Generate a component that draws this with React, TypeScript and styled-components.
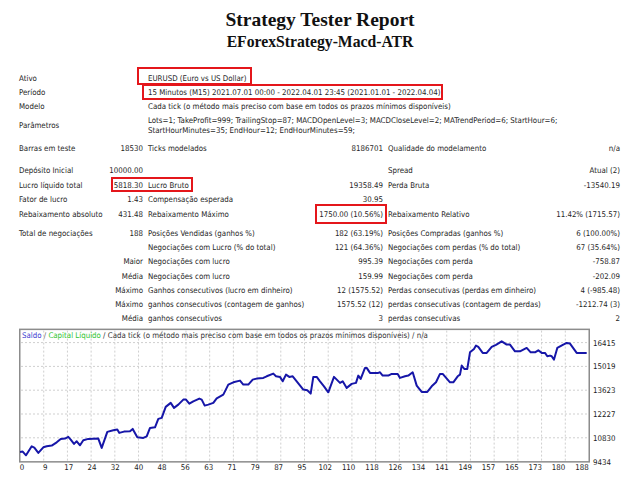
import React from "react";
import styled, { createGlobalStyle } from "styled-components";

const GlobalStyle = createGlobalStyle`
  html, body { margin: 0; padding: 0; background: #fff; }
  body {
    width: 640px;
    height: 480px;
    overflow: hidden;
    font-family: "DejaVu Sans Condensed", "Liberation Sans", sans-serif;
  }
`;

const Page = styled.div`
  position: relative;
  width: 640px;
  height: 480px;
  overflow: hidden;
  background: #fff;
`;

const Header = styled.header`
  padding-top: 9px;
  text-align: center;
  font-family: "Liberation Serif", "Times New Roman", serif;
  color: #111;
`;

const Title = styled.h1`
  margin: 0;
  font-size: 19.5px;
  line-height: 22px;
  font-weight: bold;
`;

const Subtitle = styled.h2`
  margin: 2px 0 0;
  font-size: 15.7px;
  line-height: 18px;
  font-weight: bold;
`;

const Report = styled.section`
  margin-top: 21px;
  padding-left: 19px;
  font-size: 7.85px;
  color: #262626;
`;

const Row = styled.div<{ $h: number }>`
  display: grid;
  grid-template-columns: 85px 39px 170px 70px 177px 60px;
  height: ${(p) => p.$h}px;
  align-items: center;
  white-space: nowrap;
  line-height: 10px;
`;

const Spacer = styled.div<{ $h: number }>`
  height: ${(p) => p.$h}px;
`;

const Name = styled.div`
  grid-column: 1;
`;

const Num = styled.div<{ $col: number }>`
  grid-column: ${(p) => p.$col};
  display: flex;
  justify-content: flex-end;
`;

const Caption = styled.div<{ $col: number }>`
  grid-column: ${(p) => p.$col};
  padding-left: 5px;
`;

const Wide = styled.div`
  grid-column: 3 / 7;
  padding-left: 5px;
`;

const Mark = styled.div<{ $x: number; $y: number; $w: number; $h: number }>`
  position: absolute;
  left: ${(p) => p.$x}px;
  top: ${(p) => p.$y}px;
  width: ${(p) => p.$w}px;
  height: ${(p) => p.$h}px;
  box-sizing: border-box;
  border: 2px solid #e4161b;
  pointer-events: none;
`;

const Chart = styled.svg`
  display: block;
  width: 640px;
  height: 153.6px;
  font-family: "DejaVu Sans Condensed", "Liberation Sans", sans-serif;
  font-size: 7.85px;
`;

type Line = [string, string, string, string, string, string];

const stats1: Line[] = [
  ["Depósito Inicial", "10000.00", "", "", "Spread", "Atual (2)"],
  ["Lucro líquido total", "5818.30", "Lucro Bruto", "19358.49", "Perda Bruta", "-13540.19"],
  ["Fator de lucro", "1.43", "Compensação esperada", "30.95", "", ""],
  ["Rebaixamento absoluto", "431.48", "Rebaixamento Máximo", "1750.00 (10.56%)", "Rebaixamento Relativo", "11.42% (1715.57)"],
];
const heights1 = [14, 15, 14, 15];

const stats2: Line[] = [
  ["Total de negociações", "188", "Posições Vendidas (ganhos %)", "182 (63.19%)", "Posições Compradas (ganhos %)", "6 (100.00%)"],
  ["", "", "Negociações com Lucro (% do total)", "121 (64.36%)", "Negociações com perdas (% do total)", "67 (35.64%)"],
  ["", "Maior", "Negociações com lucro", "995.39", "Negociações com perda", "-758.87"],
  ["", "Média", "Negociações com lucro", "159.99", "Negociações com perda", "-202.09"],
  ["", "Máximo", "Ganhos consecutivos (lucro em dinheiro)", "12 (1575.52)", "Perdas consecutivas (perdas em dinheiro)", "4 (-985.48)"],
  ["", "Máximo", "ganhos consecutivos (contagem de ganhos)", "1575.52 (12)", "perdas consecutivas (contagem de perdas)", "-1212.74 (3)"],
  ["", "Média", "ganhos consecutivos", "3", "perdas consecutivas", "2"],
];

const StatRow = ({ line, h }: { line: Line; h: number }) => (
  <Row $h={h}>
    <Name>{line[0]}</Name>
    <Num $col={2}>{line[1]}</Num>
    <Caption $col={3}>{line[2]}</Caption>
    <Num $col={4}>{line[3]}</Num>
    <Caption $col={5}>{line[4]}</Caption>
    <Num $col={6}>{line[5]}</Num>
  </Row>
);

const pts: [number, number][] = [
  [20, 452.3], [22.7, 452], [26, 455.7], [31.7, 446.7], [34.3, 448], [38.3, 453.3], [43.3, 447.7],
  [46.7, 446.7], [51.7, 446], [56.7, 442.7], [60.7, 439.3], [65, 439], [68.3, 437.3], [70.7, 440],
  [74, 444.3], [76.7, 441.7], [80, 445.7], [83.3, 440.7], [88.3, 439.3], [98.3, 439], [101.7, 448.3],
  [107.3, 432.3], [113.3, 430.7], [117.3, 430], [119.3, 433.3], [124, 432], [130, 431.7], [132.7, 429.3],
  [137.3, 437.7], [143.3, 438.3], [146.7, 436.7], [150, 428.3], [155, 427.7], [158.3, 419.3],
  [161.7, 418.3], [165.7, 407.3], [170.7, 403.3], [174, 408.3], [178.3, 405], [183.3, 400], [186, 400],
  [189.3, 404], [193.3, 401.7], [199.3, 399], [201.7, 400], [204.7, 406], [208.3, 405], [213.3, 403.3],
  [216.7, 398.7], [223.3, 395], [228.3, 385], [233.3, 382.7], [240, 381], [243.3, 385], [248.3, 385],
  [252.7, 380], [256.7, 379], [263.3, 378.3], [266.7, 376.7], [273.3, 374], [276, 376.7], [280, 377.3],
  [282.7, 381.7], [286, 375], [289.3, 377.3], [292.7, 376.7], [303.3, 390], [307.3, 390.7], [310.7, 394],
  [313.3, 377.3], [316.7, 377.3], [320, 381.7], [324, 386.7], [328.3, 392.7], [334, 377.3], [340, 383.3],
  [342.7, 381.7], [346.7, 388.3], [351.7, 384.3], [356, 383.3], [358.3, 376], [360.7, 379.3], [365, 368.3],
  [366.7, 368.3], [370, 373.3], [378.3, 373.3], [380, 372.7], [382.7, 376], [388.3, 376], [391.7, 374.3],
  [397.7, 374.3], [400, 378.3], [405, 376.7], [408.3, 376], [412.7, 372.7], [416.7, 386], [421.7, 392.3],
  [427.3, 392.3], [431.7, 386.7], [436, 382.7], [440, 374.3], [442.7, 374.3], [450, 382.7], [453.3, 382.7],
  [457.7, 376.7], [460, 375], [461.7, 366], [464.3, 369.3], [467.3, 369.3], [470, 352.7], [474, 349.3],
  [476, 346], [478.3, 347.3], [482.7, 353.3], [486.7, 353.3], [491.7, 347.3], [496, 345.3], [501.7, 341.7],
  [503.3, 342.7], [506.7, 345], [510, 345], [515, 351.7], [520, 351.7], [526.7, 348.3], [530.7, 352.7],
  [535, 352.7], [538.3, 350.7], [541.7, 353.3], [545, 353.3], [547.3, 356.7], [550, 356], [551.7, 356.7],
  [554, 360], [557.3, 348.3], [563.3, 345], [566.7, 343.3], [570, 344], [576.7, 353.3], [586.7, 353.3],
];

const xLabels = [0, 9, 17, 24, 32, 40, 48, 56, 63, 71, 79, 87, 95, 102, 110, 118, 126, 134, 141, 149, 157, 165, 173, 180, 188];
const yLabels = ["9434", "10830", "12227", "13623", "15019", "16415"];

const EquityChart = () => {
  const left = 20;
  const right = 589;
  const top = 330;
  const bottom = 462;
  const dx = (right - left) / 24;
  const dy = 23.8;
  const path = pts.map((p, i) => `${i ? "L" : "M"}${p[0]} ${p[1]}`).join(" ");
  return (
    <Chart viewBox="0 326.4 640 153.6">
      <rect x={19.75} y={329.75} width={569.5} height={132.5} fill="#fff" stroke="#8c8c8c" strokeWidth={1.5} />
      {Array.from({ length: 23 }, (_, i) => {
        const x = left + (i + 1) * dx;
        return <line key={`v${i}`} x1={x} x2={x} y1={top + 1} y2={bottom - 1} stroke="#cfcfcf" strokeWidth={1} strokeDasharray="2 2" />;
      })}
      {Array.from({ length: 5 }, (_, i) => {
        const y = bottom - (i + 1) * dy;
        return <line key={`h${i}`} x1={left + 1} x2={right - 1} y1={y} y2={y} stroke="#cfcfcf" strokeWidth={1} strokeDasharray="2 2" />;
      })}
      <text x={22} y={338} fill="#333">
        <tspan fill="#3b3bcf">Saldo</tspan>
        <tspan fill="#666"> / </tspan>
        <tspan fill="#2fc42f">Capital Líquido</tspan>
        <tspan fill="#333"> / Cada tick (o método mais preciso com base em todos os prazos mínimos disponíveis) / n/a</tspan>
      </text>
      <path d={path} fill="none" stroke="#1616a8" strokeWidth={2} strokeLinejoin="round" />
      {xLabels.map((v, i) => (
        <text key={`x${v}`} x={22 + i * 23.33} y={470.5} textAnchor="middle" fill="#222">
          {v}
        </text>
      ))}
      {yLabels.map((v, i) => (
        <text key={`y${v}`} x={593} y={bottom - i * dy + 3} fill="#222">
          {v}
        </text>
      ))}
    </Chart>
  );
};

export default function App() {
  return (
    <Page>
      <GlobalStyle />
      <Header>
        <Title>Strategy Tester Report</Title>
        <Subtitle>EForexStrategy-Macd-ATR</Subtitle>
      </Header>
      <Report>
        <Row $h={14}>
          <Name>Ativo</Name>
          <Wide>EURUSD (Euro vs US Dollar)</Wide>
        </Row>
        <Row $h={14}>
          <Name>Período</Name>
          <Wide>15 Minutos (M15) 2021.07.01 00:00 - 2022.04.01 23:45 (2021.01.01 - 2022.04.04)</Wide>
        </Row>
        <Row $h={14}>
          <Name>Modelo</Name>
          <Wide>Cada tick (o método mais preciso com base em todos os prazos mínimos disponíveis)</Wide>
        </Row>
        <Row $h={24}>
          <Name>Parâmetros</Name>
          <Wide>
            Lots=1; TakeProfit=999; TrailingStop=87; MACDOpenLevel=3; MACDCloseLevel=2; MATrendPeriod=6; StartHour=6;
            <br />
            StartHourMinutes=35; EndHour=12; EndHourMinutes=59;
          </Wide>
        </Row>
        <Spacer $h={4} />
        <StatRow line={["Barras em teste", "18530", "Ticks modelados", "8186701", "Qualidade do modelamento", "n/a"]} h={14} />
        <Spacer $h={8} />
        {stats1.map((l, i) => (
          <StatRow key={`a${i}`} line={l} h={heights1[i]} />
        ))}
        <Spacer $h={5} />
        {stats2.map((l, i) => (
          <StatRow key={`b${i}`} line={l} h={14.2} />
        ))}
      </Report>
      <EquityChart />
      <Mark $x={137} $y={67} $w={115} $h={18} />
      <Mark $x={142} $y={84} $w={301} $h={16} />
      <Mark $x={111} $y={177} $w={82} $h={15} />
      <Mark $x={315} $y={204} $w={72} $h={20} />
    </Page>
  );
}
